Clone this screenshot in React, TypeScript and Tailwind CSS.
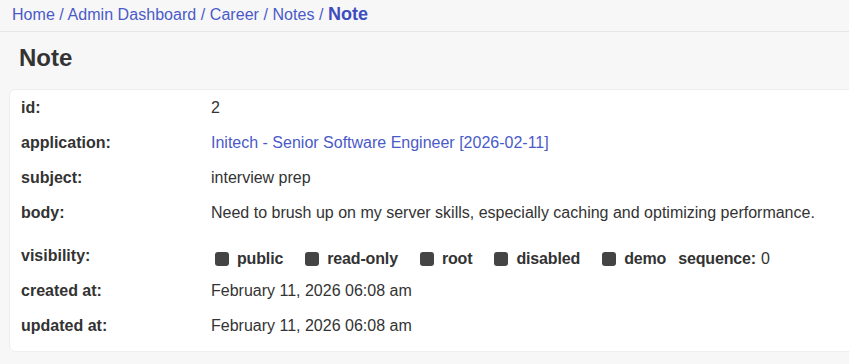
import React from "react";

const rows1 = [
  { label: "id:", value: "2" },
  { label: "application:", value: "Initech - Senior Software Engineer [2026-02-11]", link: true },
  { label: "subject:", value: "interview prep" },
  { label: "body:", value: "Need to brush up on my server skills, especially caching and optimizing performance." },
];

const rows2 = [
  { label: "created at:", value: "February 11, 2026 06:08 am" },
  { label: "updated at:", value: "February 11, 2026 06:08 am" },
];

function Box() {
  return <span className="inline-block w-[14px] h-[14px] rounded-[3px] bg-[#444444]" />;
}

export default function App() {
  return (
    <div
      className="min-h-[364px] bg-[#f7f7f7] text-[#333333] text-[16px] overflow-hidden"
      style={{ fontFamily: '"Liberation Sans", Arial, sans-serif' }}
    >
      <div className="h-[32px] border-b border-[#e6e6e6] pl-[12px] pt-[5px] leading-[18px] text-[#4a5ac8]">
        <span className="tracking-[0.05px]">Home / Admin Dashboard / Career / Notes / </span>
        <span className="font-bold text-[#3d4dbf] text-[18px]">Note</span>
      </div>
      <h1 className="pl-[19px] pt-[12px] h-[57px] text-[24px] leading-[28px] font-bold text-[#333333]">Note</h1>
      <div className="pl-[9px] flex">
        <div className="flex-1 -mr-6 bg-white rounded-[6px] border border-[#eeeeee] pb-[8px]">
          {rows1.map((r) => (
            <div key={r.label} className="flex h-[35px] items-center pl-[11px]">
              <div className="w-[190px] font-bold">{r.label}</div>
              <div className={r.link ? "text-[#4a5ac8]" : ""}>{r.value}</div>
            </div>
          ))}
          <div className="flex h-[43px] items-start pl-[11px]">
            <div className="w-[190px] font-bold pt-[17px] leading-[18px]">visibility:</div>
            <div className="flex items-center pt-[20px] leading-[18px] pl-[4px] font-bold tracking-[-0.15px]">
              <Box />
              <span className="ml-[8px] mr-[22px]">public</span>
              <Box />
              <span className="ml-[8px] mr-[22px]">read-only</span>
              <Box />
              <span className="ml-[8px] mr-[22px]">root</span>
              <Box />
              <span className="ml-[8px] mr-[22px]">disabled</span>
              <Box />
              <span className="ml-[8px] mr-[12px]">demo</span>
              <span>sequence:</span>
              <span className="ml-[5px] font-normal">0</span>
            </div>
          </div>
          {rows2.map((r) => (
            <div key={r.label} className="flex h-[35px] items-center pl-[11px]">
              <div className="w-[190px] font-bold">{r.label}</div>
              <div>{r.value}</div>
            </div>
          ))}
        </div>
      </div>
    </div>
  );
}
